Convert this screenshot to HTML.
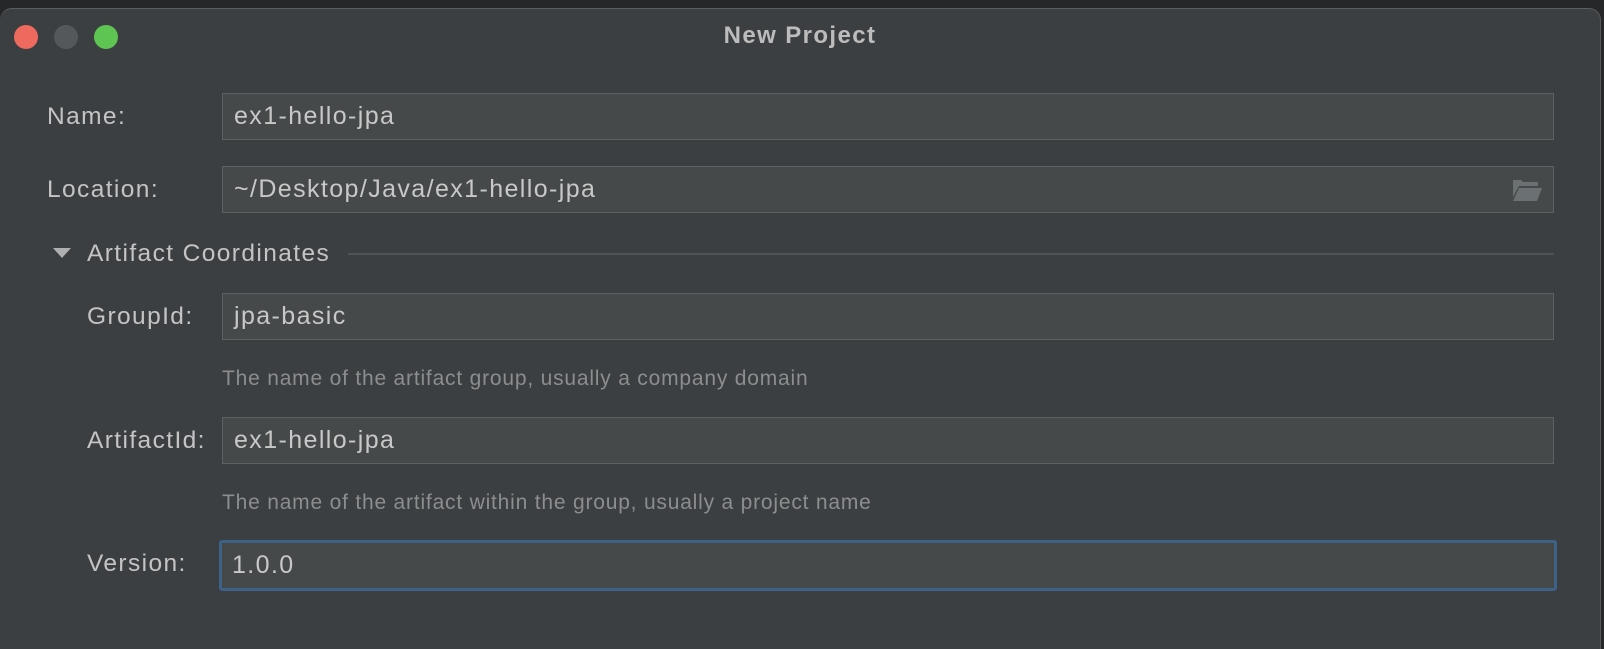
<!DOCTYPE html>
<html><head><style>
body{margin:0;width:1604px;height:640px;background:#262729;overflow:hidden;font-family:"Liberation Sans",sans-serif;}
.win{position:absolute;left:0;top:8px;width:1600px;height:640px;background:#3c3f41;border-radius:12px 12px 0 0;border-top:1px solid #5a5d60;border-right:1px solid #55585a;}
.dot{position:absolute;top:16px;width:24px;height:24px;border-radius:50%;}
.title{position:absolute;top:13px;left:0;width:1600px;text-align:center;color:#bcbcbc;font-weight:bold;font-size:24px;letter-spacing:1.4px;}
.lbl{position:absolute;color:#c4c4c4;font-size:24.5px;letter-spacing:1.4px;line-height:47px;}
.f{position:absolute;left:222px;width:1332px;height:47px;background:#45494a;border:1.5px solid #5e6163;color:#c8c8c8;font-size:25px;letter-spacing:1.4px;line-height:44px;padding-left:11px;box-sizing:border-box;}
.hint{position:absolute;left:222px;color:#8b8d8f;font-size:21px;letter-spacing:0.8px;line-height:24px;}
</style></head><body>
<div class="win">
<div class="dot" style="left:14px;background:#ee6a5e"></div>
<div class="dot" style="left:54px;background:#55585b"></div>
<div class="dot" style="left:94px;background:#5ec552"></div>
<div class="title">New Project</div>
<div class="lbl" style="left:47px;top:84px">Name:</div>
<div class="f" style="top:84px">ex1-hello-jpa</div>
<div class="lbl" style="left:47px;top:157px">Location:</div>
<div class="f" style="top:157px">~/Desktop/Java/ex1-hello-jpa
<svg style="position:absolute;left:1289px;top:12px" width="31" height="23" viewBox="0 0 31 23"><path d="M1 1h8l2 2h15v4H7L1 18z" fill="#6b7073"/><path d="M7 9h23l-5 13H1z" fill="#6b7073"/></svg></div>
<svg style="position:absolute;left:53px;top:239px" width="18" height="10"><path d="M0 0h18L9 10z" fill="#aeb0b2"/></svg>
<div class="lbl" style="left:87px;top:221px">Artifact Coordinates</div>
<div style="position:absolute;left:348px;top:244px;width:1206px;height:1.5px;background:#505356"></div>
<div class="lbl" style="left:87px;top:284px">GroupId:</div>
<div class="f" style="top:284px">jpa-basic</div>
<div class="hint" style="top:358px">The name of the artifact group, usually a company domain</div>
<div class="lbl" style="left:87px;top:408px">ArtifactId:</div>
<div class="f" style="top:408px">ex1-hello-jpa</div>
<div class="hint" style="top:482px">The name of the artifact within the group, usually a project name</div>
<div class="lbl" style="left:87px;top:531px">Version:</div>
<div class="f" style="top:531px;left:219px;width:1338px;height:51px;border:3.5px solid #3d6288;border-radius:3px;padding-left:10px">1.0.0</div>
</div>
</body></html>
